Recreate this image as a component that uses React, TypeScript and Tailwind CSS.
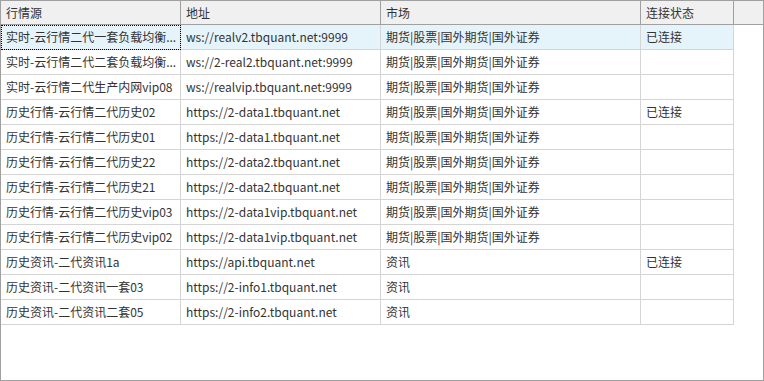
import React from "react";

const rows = [
  ["实时-云行情二代一套负载均衡...", "ws://realv2.tbquant.net:9999", "期货|股票|国外期货|国外证券", "已连接"],
  ["实时-云行情二代二套负载均衡...", "ws://2-real2.tbquant.net:9999", "期货|股票|国外期货|国外证券", ""],
  ["实时-云行情二代生产内网vip08", "ws://realvip.tbquant.net:9999", "期货|股票|国外期货|国外证券", ""],
  ["历史行情-云行情二代历史02", "https://2-data1.tbquant.net", "期货|股票|国外期货|国外证券", "已连接"],
  ["历史行情-云行情二代历史01", "https://2-data1.tbquant.net", "期货|股票|国外期货|国外证券", ""],
  ["历史行情-云行情二代历史22", "https://2-data2.tbquant.net", "期货|股票|国外期货|国外证券", ""],
  ["历史行情-云行情二代历史21", "https://2-data2.tbquant.net", "期货|股票|国外期货|国外证券", ""],
  ["历史行情-云行情二代历史vip03", "https://2-data1vip.tbquant.net", "期货|股票|国外期货|国外证券", ""],
  ["历史行情-云行情二代历史vip02", "https://2-data1vip.tbquant.net", "期货|股票|国外期货|国外证券", ""],
  ["历史资讯-二代资讯1a", "https://api.tbquant.net", "资讯", "已连接"],
  ["历史资讯-二代资讯一套03", "https://2-info1.tbquant.net", "资讯", ""],
  ["历史资讯-二代资讯二套05", "https://2-info2.tbquant.net", "资讯", ""],
];

const widths = ["w-[180px]", "w-[200px]", "w-[260px]", "w-[93px]"];

export default function App() {
  return (
    <div
      className="w-[764px] h-[381px] border border-[#a0a0a0] bg-white text-[12px] text-[#333] overflow-hidden"
      style={{ fontFamily: '"Noto Sans CJK SC", "Noto Sans", sans-serif' }}
    >
      {/* header */}
      <div className="flex h-[24px] bg-[#f0f0f0] border-b border-[#a0a0a0]">
        {["行情源", "地址", "市场", "连接状态"].map((h, i) => (
          <div
            key={h}
            className={`${widths[i]} shrink-0 border-r border-[#a0a0a0] px-[5px] flex items-center leading-none`}
          >
            {h}
          </div>
        ))}
        <div className="flex-1" />
      </div>

      {rows.map((r, ri) => (
        <div key={ri} className="flex h-[25px]">
          {r.map((c, ci) => (
            <div
              key={ci}
              className={`${widths[ci]} shrink-0 border-r border-b border-[#d5d5d5] px-[5px] flex items-center whitespace-nowrap overflow-hidden leading-none ${
                ri === 0 ? "bg-[#e5f3fb]" : ""
              } ${ri === 0 && ci === 0 ? "outline-1 outline-dotted outline-black -outline-offset-1" : ""}`}
            >
              {c}
            </div>
          ))}
        </div>
      ))}
    </div>
  );
}
